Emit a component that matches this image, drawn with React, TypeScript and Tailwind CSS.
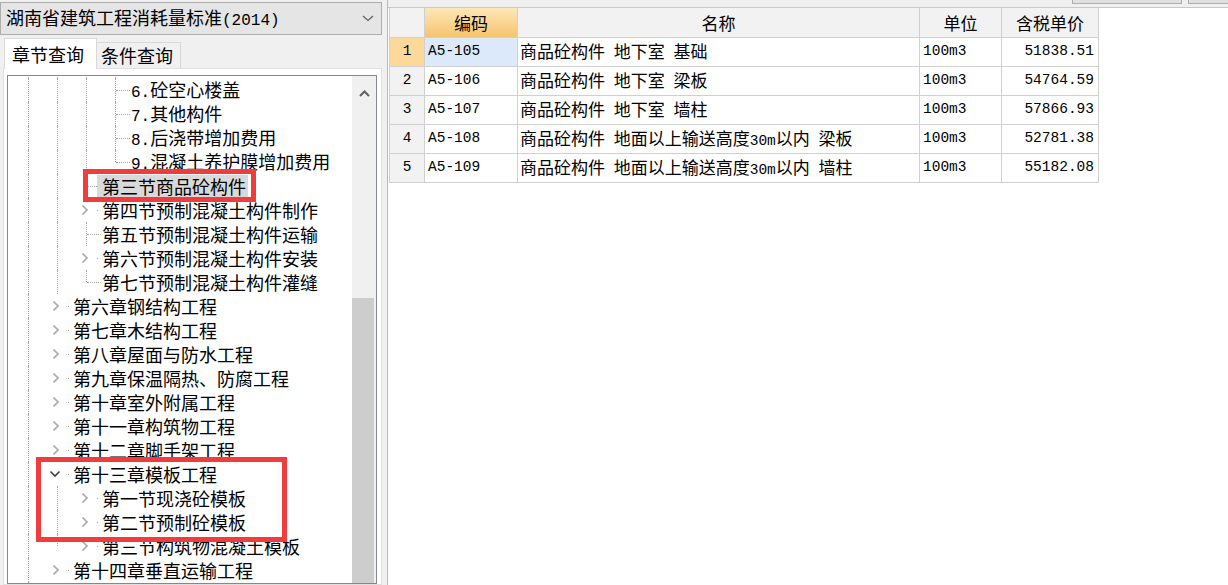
import React from 'react';

type Guide = 'line' | 'half' | 'none';
type NodeKind = 'tee' | 'corner' | 'closed' | 'open';

interface TreeRow {
  guides: Guide[];
  node: NodeKind;
  label: string;
  selected?: boolean;
}

const CJK = "font-['Noto_Sans_CJK_SC',sans-serif]";
const TREE_MONO = "font-['Liberation_Mono',monospace] text-[16px]";
const TABLE_MONO = "font-['Liberation_Mono',monospace] text-[14.5px]";

const L: Guide[] = ['line'];
const LL: Guide[] = ['line', 'line'];
const LLL: Guide[] = ['line', 'line', 'line'];

const TREE: TreeRow[] = [
  // row scrolled out above the top edge: only its guide lines peek in
  { guides: LLL, node: 'tee', label: '' },
  { guides: LLL, node: 'tee', label: '6.砼空心楼盖' },
  { guides: LLL, node: 'tee', label: '7.其他构件' },
  { guides: LLL, node: 'tee', label: '8.后浇带增加费用' },
  { guides: LLL, node: 'corner', label: '9.混凝土养护膜增加费用' },
  { guides: LL, node: 'tee', label: '第三节商品砼构件', selected: true },
  { guides: LL, node: 'closed', label: '第四节预制混凝土构件制作' },
  { guides: LL, node: 'tee', label: '第五节预制混凝土构件运输' },
  { guides: LL, node: 'closed', label: '第六节预制混凝土构件安装' },
  { guides: LL, node: 'corner', label: '第七节预制混凝土构件灌缝' },
  { guides: L, node: 'closed', label: '第六章钢结构工程' },
  { guides: L, node: 'closed', label: '第七章木结构工程' },
  { guides: L, node: 'closed', label: '第八章屋面与防水工程' },
  { guides: L, node: 'closed', label: '第九章保温隔热、防腐工程' },
  { guides: L, node: 'closed', label: '第十章室外附属工程' },
  { guides: L, node: 'closed', label: '第十一章构筑物工程' },
  { guides: L, node: 'closed', label: '第十二章脚手架工程' },
  { guides: L, node: 'open', label: '第十三章模板工程' },
  { guides: LL, node: 'closed', label: '第一节现浇砼模板' },
  { guides: LL, node: 'closed', label: '第二节预制砼模板' },
  { guides: ['line', 'half'], node: 'closed', label: '第三节构筑物混凝土模板' },
  { guides: L, node: 'closed', label: '第十四章垂直运输工程' },
  { guides: L, node: 'closed', label: '第十五章施工排水、降水' },
];

const ITEMS = [
  { code: 'A5-105', name: '商品砼构件 地下室 基础', unit: '100m3', price: '51838.51' },
  { code: 'A5-106', name: '商品砼构件 地下室 梁板', unit: '100m3', price: '54764.59' },
  { code: 'A5-107', name: '商品砼构件 地下室 墙柱', unit: '100m3', price: '57866.93' },
  { code: 'A5-108', name: '商品砼构件 地面以上输送高度30m以内 梁板', unit: '100m3', price: '52781.38' },
  { code: 'A5-109', name: '商品砼构件 地面以上输送高度30m以内 墙柱', unit: '100m3', price: '55182.08' },
];

// ascii runs get the narrow mono face, like the half-width glyphs of the original
function Mixed({ text, mono }: { text: string; mono: string }) {
  const parts = text.match(/[\x00-\x7f]+|[^\x00-\x7f]+/g) || [];
  return (
    <span className="whitespace-pre">
      {parts.map((p, i) =>
        /^[\x00-\x7f]/.test(p) ? (
          <span key={i} className={mono}>{p}</span>
        ) : (
          <span key={i}>{p}</span>
        )
      )}
    </span>
  );
}

const GuideCell = ({ kind }: { kind: Guide }) => (
  <div className="w-[29px] h-full flex justify-center shrink-0">
    {kind === 'line' && <div className="h-full border-l border-dotted border-[#a0a0a0]" />}
    {kind === 'half' && <div className="h-1/2 border-l border-dotted border-[#a0a0a0]" />}
  </div>
);

const Chevron = () => (
  <svg width="8" height="12" viewBox="0 0 8 12">
    <polyline points="1.5,1.5 6,6 1.5,10.5" fill="none" stroke="#a8a8a8" strokeWidth="1.7" />
  </svg>
);

const ChevronOpen = () => (
  <svg width="12" height="8" viewBox="0 0 12 8">
    <polyline points="1.5,1.5 6,6 10.5,1.5" fill="none" stroke="#404040" strokeWidth="1.6" />
  </svg>
);

const NodeCell = ({ kind }: { kind: NodeKind }) => {
  if (kind === 'tee' || kind === 'corner') {
    return (
      <div className="w-[29px] h-full flex shrink-0">
        <div className="w-[14px]" />
        <div
          className={`border-l border-dotted border-[#a0a0a0] ${kind === 'tee' ? 'h-full' : 'h-1/2'}`}
        />
        <div className="flex-1 flex items-center">
          <div className="w-full border-t border-dotted border-[#a0a0a0]" />
        </div>
      </div>
    );
  }
  return (
    <div className={`w-[29px] h-full flex items-center shrink-0 ${kind === 'open' ? 'pl-[6px]' : 'pl-[9px]'}`}>
      {kind === 'open' ? <ChevronOpen /> : <Chevron />}
      <div className="ml-auto mr-[3px] w-px border-t border-dotted border-[#a0a0a0]" />
    </div>
  );
};

const TreeLine = ({ row }: { row: TreeRow }) => (
  <div className="h-[24px] flex items-center text-[18px] text-black">
    {row.guides.map((g, i) => (
      <GuideCell key={i} kind={g} />
    ))}
    <NodeCell kind={row.node} />
    <span
      className={
        row.selected
          ? 'h-[23px] flex items-center ml-[-4px] pl-[5px] pr-[2px] bg-[#d9d9d9]'
          : 'h-[23px] flex items-center pl-[1px]'
      }
    >
      <Mixed text={row.label} mono={TREE_MONO} />
    </span>
  </div>
);

const LeftPanel = () => (
  <div className="w-[387px] shrink-0 flex flex-col pt-[2px]">
    <div className="h-[33px] w-[382px] border border-[#adadad] bg-[#e5e5e5] flex items-center pl-[5px] text-[18px] text-black">
      <Mixed text="湖南省建筑工程消耗量标准(2014)" mono={TREE_MONO} />
      <svg className="ml-auto mr-[7px]" width="12" height="7" viewBox="0 0 12 7">
        <polyline points="1,1 6,5.5 11,1" fill="none" stroke="#606060" strokeWidth="1.2" />
      </svg>
    </div>

    <div className="h-[33px] flex items-end pl-[4px] text-[18px] text-black">
      <div className="relative z-10 -mb-px h-[31px] w-[93px] bg-white border border-b-0 border-[#d9d9d9] flex items-center pl-[7px]">
        章节查询
      </div>
      <div className="h-[26px] w-[84px] bg-[#f0f0f0] border border-b-0 border-l-0 border-[#d9d9d9] flex items-center pl-[4px]">
        条件查询
      </div>
    </div>

    <div className="ml-[3px] w-[379px] flex-1 min-h-0 bg-white border border-[#e0e0e0] pt-[6px] pl-[3px]">
      <div className="w-[370px] h-full border border-[#828790] flex overflow-hidden">
        <div className="flex-1 overflow-hidden">
          <div className="-mt-[22px] pl-[6px]">
            {TREE.map((row, i) => (
              <TreeLine key={i} row={row} />
            ))}
          </div>
        </div>
        <div className="w-[24px] bg-[#f0f0f0] flex flex-col">
          <div className="h-[34px] flex items-center justify-center">
            <svg width="11" height="7" viewBox="0 0 11 7">
              <polyline points="1,6 5.5,1.5 10,6" fill="none" stroke="#606060" strokeWidth="2" />
            </svg>
          </div>
          <div className="h-[188px]" />
          <div className="flex-1 mr-[2px] bg-[#cdcdcd]" />
        </div>
      </div>
    </div>
  </div>
);

const HEAD = ['', '编码', '名称', '单位', '含税单价'];

const RightPanel = () => (
  <div className="flex-1 flex flex-col border-l border-[#b4b9c3]">
    <div className="h-[7px] bg-[#f0f0f0] flex justify-end items-start gap-[6px]">
      <div className="w-[110px] h-[4px] bg-[#e1e1e1] border border-t-0 border-[#adadad]" />
      <div className="w-[40px] h-[4px] bg-[#e1e1e1] border border-t-0 border-r-0 border-[#adadad]" />
    </div>
    <div className="flex-1 bg-white border-t border-[#c8c8c8] pl-px">
      <div className={`w-[710px] grid grid-cols-[35px_93px_402px_82px_97px] border-l border-[#d0d0d0] text-[17px] text-black ${CJK}`}>
        {HEAD.map((h, i) => (
          <div
            key={h || 'corner'}
            className={
              i === 1
                ? 'h-[30px] flex items-center justify-center border-r border-b border-[#d0d0d0] bg-gradient-to-b from-[#fde7b8] to-[#f5c46c]'
                : 'h-[30px] flex items-center justify-center border-r border-b border-[#d0d0d0] bg-[#f2f2f2]'
            }
          >
            {h}
          </div>
        ))}
        {ITEMS.map((it, i) => (
          <React.Fragment key={it.code}>
            <div
              className={`h-[29px] flex items-center justify-center border-r border-b border-[#d0d0d0] ${TABLE_MONO} ${
                i === 0 ? 'bg-[#fcd89b]' : 'bg-[#f2f2f2]'
              }`}
            >
              {i + 1}
            </div>
            <div
              className={`h-[29px] flex items-center pl-[3px] border-r border-b border-[#d0d0d0] ${TABLE_MONO} ${
                i === 0 ? 'bg-[#dbe9fa]' : ''
              }`}
            >
              {it.code}
            </div>
            <div className="h-[29px] flex items-center pl-[2px] border-r border-b border-[#d0d0d0]">
              <Mixed text={it.name} mono={TABLE_MONO} />
            </div>
            <div className={`h-[29px] flex items-center pl-[3px] border-r border-b border-[#d0d0d0] ${TABLE_MONO}`}>
              {it.unit}
            </div>
            <div className={`h-[29px] flex items-center justify-end pr-[4px] border-r border-b border-[#d0d0d0] ${TABLE_MONO}`}>
              {it.price}
            </div>
          </React.Fragment>
        ))}
      </div>
    </div>
  </div>
);

export default function App() {
  return (
    <div className={`relative w-[1228px] h-[585px] overflow-hidden bg-[#f0f0f0] flex ${CJK}`}>
      <LeftPanel />
      <RightPanel />
      {/* annotation boxes drawn over the tree */}
      <div className="absolute left-[83px] top-[169px] w-[173px] h-[33px] border-[5px] border-[#f03c3c]" />
      <div className="absolute left-[36px] top-[457px] w-[251px] h-[85px] border-[5px] border-[#f03c3c]" />
    </div>
  );
}
